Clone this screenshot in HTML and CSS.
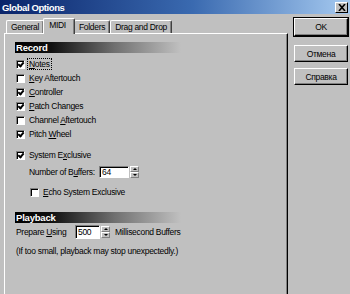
FILE: index.html
```html
<!DOCTYPE html>
<html>
<head>
    <link rel="stylesheet" href="styles.css">
</head>
<body>
    <div class="window">
        <div class="titlebar">
            <span class="title">Global Options</span>
            <span class="close">
                <svg width="8" height="7" viewBox="0 0 8 7"><path d="M1 0 L7 7 M7 0 L1 7" stroke="#000" stroke-width="1.6"/></svg>
            </span>
        </div>

        <div class="client">
            <div class="tabs">
                <div class="tab-row">
                    <div class="tab">General</div>
                    <div class="tab active">MIDI</div>
                    <div class="tab">Folders</div>
                    <div class="tab">Drag and Drop</div>
                </div>

                <div class="panel">
                    <!-- RECORD -->
                    <div class="section">Record</div>
                    <div class="check first"><span class="box on"></span><span class="focus"><u>N</u>otes</span></div>
                    <div class="check"><span class="box"></span><span><u>K</u>ey Aftertouch</span></div>
                    <div class="check"><span class="box on"></span><span><u>C</u>ontroller</span></div>
                    <div class="check"><span class="box on"></span><span><u>P</u>atch Changes</span></div>
                    <div class="check"><span class="box"></span><span>Channel <u>A</u>ftertouch</span></div>
                    <div class="check"><span class="box on"></span><span>Pitch <u>W</u>heel</span></div>

                    <div class="check sysex"><span class="box on"></span><span>System E<u>x</u>clusive</span></div>
                    <div class="field buffers">
                        <span class="label">Number of B<u>u</u>ffers:</span>
                        <span class="input wide">64</span>
                        <span class="spin"><i class="up"></i><i class="down"></i></span>
                    </div>
                    <div class="check echo"><span class="box"></span><span><u>E</u>cho System Exclusive</span></div>

                    <!-- PLAYBACK -->
                    <div class="section playback">Playback</div>
                    <div class="field prepare">
                        <span class="label">Prepare <u>U</u>sing</span>
                        <span class="input narrow">500</span>
                        <span class="spin"><i class="up"></i><i class="down"></i></span>
                        <span class="unit">Millisecond Buffers</span>
                    </div>
                    <div class="note">(If too small, playback may stop unexpectedly.)</div>
                </div>
            </div>

            <div class="buttons">
                <div class="btn default"><span>OK</span></div>
                <div class="btn cancel"><span>Отмена</span></div>
                <div class="btn"><span>Справка</span></div>
            </div>
        </div>
    </div>
</body>
</html>
```

FILE: styles.css
```css
body {
    margin: 0;
    background-color: #c0c0c0;
    font-family: "Liberation Sans", Arial, sans-serif;
    font-size: 8.5px;
    letter-spacing: -0.3px;
    color: #000;
    white-space: nowrap;
}

.window {
    width: 350px;
    height: 294px;
    overflow: hidden;
}

.titlebar {
    height: 14px;
    display: flex;
    align-items: center;
    justify-content: space-between;
    background: linear-gradient(to right, #0a246a 0%, #3a6ab0 55%, #a6caf0 100%);
}

.title {
    color: #fff;
    font-weight: bold;
    font-size: 9.5px;
    letter-spacing: -0.4px;
    padding-left: 2px;
}

.close {
    width: 11px;
    height: 9px;
    margin-right: 2px;
    display: flex;
    align-items: center;
    justify-content: center;
    background-color: #c0c0c0;
    border-top: 1px solid #fff;
    border-left: 1px solid #fff;
    border-right: 1px solid #000;
    border-bottom: 1px solid #000;
}

.client {
    display: flex;
    padding-top: 4px;
}

/* TABS */
.tabs {
    margin-left: 4px;
    width: 284px;
}

.tab-row {
    display: flex;
    align-items: flex-end;
    height: 15px;
    padding-left: 2px;
}

.tab {
    height: 12px;
    line-height: 12px;
    padding: 0 4px;
    border-top: 1px solid #fff;
    border-left: 1px solid #fff;
    border-right: 1px solid #404040;
    border-top-left-radius: 2px;
    border-top-right-radius: 2px;
    box-shadow: inset -1px 0 #808080;
}

.tab.active {
    height: 15px;
    line-height: 13px;
    margin: 0 -1px -1px -1px;
    padding: 0 8px 0 5px;
    position: relative;
    z-index: 1;
    background-color: #c0c0c0;
}

.panel {
    height: 257px;
    border-top: 1px solid #fff;
    border-left: 1px solid #fff;
    border-right: 1px solid #000;
    border-bottom: 1px solid #000;
    box-shadow: inset -1px -1px #808080;
    padding: 8px 0 0 10px;
    width: 272px;
}

.section {
    width: 165px;
    height: 11px;
    line-height: 11px;
    padding-left: 1px;
    color: #fff;
    font-weight: bold;
    font-size: 9.5px;
    letter-spacing: -0.2px;
    background: linear-gradient(to right, #000 0%, #101010 22%, #707070 60%, #c0c0c0 100%);
}

.section.playback {
    margin-top: 13px;
}

/* CHECKBOXES */
.check {
    height: 14px;
    display: flex;
    align-items: center;
    padding-left: 1px;
}

.check.first {
    margin-top: 4px;
}

.check.sysex {
    margin-top: 7px;
}

.check.echo {
    margin-top: 6px;
    padding-left: 15px;
}

.box {
    width: 7px;
    height: 7px;
    margin-right: 4px;
    background-color: #fff;
    border-top: 1px solid #808080;
    border-left: 1px solid #808080;
    border-right: 1px solid #fff;
    border-bottom: 1px solid #fff;
    box-shadow: inset 1px 1px #000;
    position: relative;
}

.box.on::after {
    content: "";
    position: absolute;
    left: 2px;
    top: 0px;
    width: 2px;
    height: 4px;
    border-right: 2px solid #000;
    border-bottom: 2px solid #000;
    transform: rotate(40deg);
}

.focus {
    outline: 1px dotted #000;
    padding: 0 1px;
    margin-left: -1px;
}

/* FIELDS */
.field {
    height: 14px;
    display: flex;
    align-items: center;
}

.field.buffers {
    margin-top: 3px;
    padding-left: 14px;
}

.field.buffers .label {
    width: 70px;
}

.field.prepare {
    margin-top: 2px;
    padding-left: 1px;
}

.field.prepare .label {
    width: 59px;
}

.input {
    height: 10px;
    line-height: 10px;
    padding-left: 2px;
    background-color: #fff;
    border-top: 1px solid #808080;
    border-left: 1px solid #808080;
    border-right: 1px solid #fff;
    border-bottom: 1px solid #fff;
    box-shadow: inset 1px 1px #000;
}

.input.wide {
    width: 26px;
}

.input.narrow {
    width: 21px;
    height: 12px;
    line-height: 12px;
}

.spin {
    display: flex;
    flex-direction: column;
    width: 9px;
    height: 12px;
    margin-left: 1px;
}

.spin i {
    flex: 1;
    position: relative;
    background-color: #c0c0c0;
    border-top: 1px solid #fff;
    border-left: 1px solid #fff;
    border-right: 1px solid #808080;
    border-bottom: 1px solid #808080;
}

.spin i::after {
    content: "";
    position: absolute;
    left: 2px;
    top: 1px;
    border-left: 2px solid transparent;
    border-right: 2px solid transparent;
}

.spin .up::after {
    border-bottom: 2px solid #000;
}

.spin .down::after {
    border-top: 2px solid #000;
}

.unit {
    margin-left: 5px;
}

.note {
    margin-top: 5px;
    height: 14px;
    line-height: 14px;
    padding-left: 1px;
}

/* BUTTONS */
.buttons {
    margin-left: 6px;
    display: flex;
    flex-direction: column;
    width: 54px;
}

.btn {
    height: 15px;
    display: flex;
    align-items: center;
    justify-content: center;
    border-top: 1px solid #fff;
    border-left: 1px solid #fff;
    border-right: 1px solid #000;
    border-bottom: 1px solid #000;
    box-shadow: inset -1px -1px #808080;
    margin-top: 6px;
}

.btn.default {
    height: 16px;
    margin-top: 0;
    outline: 1px solid #000;
}

.btn.cancel {
    margin-top: 9px;
}
```
